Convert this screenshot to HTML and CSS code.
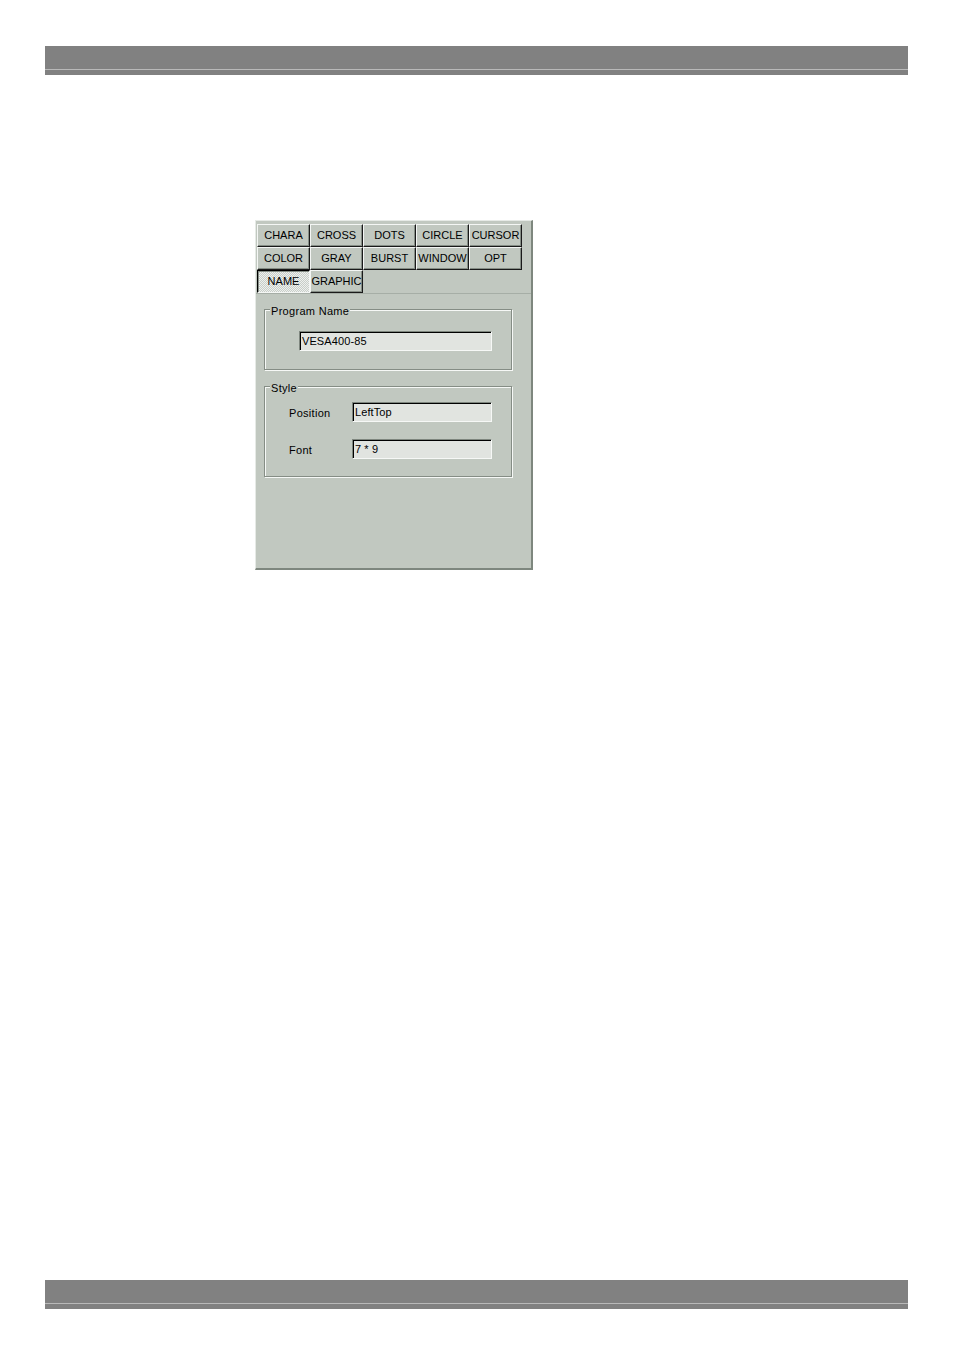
FILE: index.html
```html
<!DOCTYPE html>
<html>
<head>
<meta charset="utf-8">
<title>Program Name</title>
<link rel="stylesheet" href="styles.css">
</head>
<body>
<div class="page">
  <div class="bar"></div>

  <div class="panel">
    <div class="tabs">
      <div class="tab">CHARA</div>
      <div class="tab">CROSS</div>
      <div class="tab">DOTS</div>
      <div class="tab">CIRCLE</div>
      <div class="tab">CURSOR</div>
      <div class="tab">COLOR</div>
      <div class="tab">GRAY</div>
      <div class="tab">BURST</div>
      <div class="tab">WINDOW</div>
      <div class="tab">OPT</div>
      <div class="tab tab-active">NAME</div>
      <div class="tab">GRAPHIC</div>
    </div>

    <div class="content">
      <fieldset class="group">
        <legend class="legend">Program Name</legend>
        <div class="group-body body-name">
          <div class="field field-wide">VESA400-85</div>
        </div>
      </fieldset>

      <fieldset class="group group-style">
        <legend class="legend">Style</legend>
        <div class="group-body body-style">
          <div class="row">
            <span class="label">Position</span>
            <div class="field field-narrow">LeftTop</div>
          </div>
          <div class="row">
            <span class="label">Font</span>
            <div class="field field-narrow">7 * 9</div>
          </div>
        </div>
      </fieldset>
    </div>
  </div>

  <div class="bar bar-bottom"></div>
</div>
</body>
</html>
```

FILE: styles.css
```css
html, body {
  margin: 0;
  padding: 0;
  background: #ffffff;
}

.page {
  width: 954px;
  height: 1351px;
  padding-top: 46px;
  box-sizing: border-box;
  font-family: "Liberation Sans", Arial, sans-serif;
}

.bar {
  margin-left: 45px;
  width: 863px;
  height: 29px;
  background: linear-gradient(to bottom,
    #818181 0, #818181 23px,
    #b9b9b9 23px, #b9b9b9 24px,
    #818181 24px, #818181 29px);
}

.bar-bottom {
  margin-top: 710px;
}

.panel {
  margin-top: 145px;
  margin-left: 255px;
  width: 278px;
  height: 350px;
  box-sizing: border-box;
  background: #c1c8c0;
  border-top: 1px solid #e6eae6;
  border-left: 1px solid #e6eae6;
  border-right: 2px solid #7e877e;
  border-bottom: 2px solid #7e877e;
  font-size: 11px;
  letter-spacing: 0.3px;
  color: #000;
}

.tabs {
  display: grid;
  grid-template-columns: repeat(5, 53px);
  grid-auto-rows: 23px;
  padding: 3px 0 0 1px;
  border-bottom: 1px solid #a6aea6;
}

.tab {
  box-sizing: border-box;
  display: flex;
  align-items: center;
  justify-content: center;
  border-top: 1px solid #f4f6f4;
  border-left: 1px solid #f4f6f4;
  border-right: 1px solid #1a1a1a;
  border-bottom: 1px solid #1a1a1a;
  box-shadow: inset -1px -1px 0 #868e86;
  background: #c1c8c0;
  white-space: nowrap;
  letter-spacing: 0;
  overflow: hidden;
  line-height: 13px;
}

.tab-active {
  border-top: 1px solid #000;
  border-left: 1px solid #000;
  border-right: 1px solid #f4f6f4;
  border-bottom: 1px solid #f4f6f4;
  box-shadow: inset 1px 1px 0 #868e86;
  background: repeating-conic-gradient(#eef0ee 0 25%, #c8cec8 0 50%) 0 0 / 2px 2px;
}

.content {
  padding: 7px 0 0 8px;
}

.group {
  width: 248px;
  box-sizing: border-box;
  margin: 0;
  padding: 0;
  min-width: 0;
  border: 1px solid #858d85;
  box-shadow: 1px 1px 0 #f6f8f6, inset 1px 1px 0 #f6f8f6;
}

.legend {
  margin-left: 5px;
  padding: 4px 1px 0;
  line-height: 13px;
  height: 13px;
  background: linear-gradient(to bottom, transparent 0, transparent 4px, #c1c8c0 4px);
  letter-spacing: 0.3px;
}

.group-style {
  margin-top: 8px;
}

.body-name {
  padding: 13px 0 18px 34px;
}

.body-style {
  padding: 7px 0 17px 24px;
  display: flex;
  flex-direction: column;
  gap: 17px;
}

.row {
  display: flex;
  align-items: center;
}

.label {
  width: 63px;
  line-height: 13px;
  padding-top: 2px;
}

.field {
  box-sizing: border-box;
  height: 20px;
  padding: 0 2px;
  display: flex;
  align-items: center;
  background: #e1e4e0;
  border-top: 1px solid #7e867e;
  border-left: 1px solid #7e867e;
  border-right: 1px solid #f6f8f6;
  border-bottom: 1px solid #f6f8f6;
  box-shadow: inset 1px 1px 0 #000;
  line-height: 13px;
  letter-spacing: 0.1px;
  white-space: nowrap;
}

.field-wide {
  width: 193px;
}

.field-narrow {
  width: 140px;
}
```
